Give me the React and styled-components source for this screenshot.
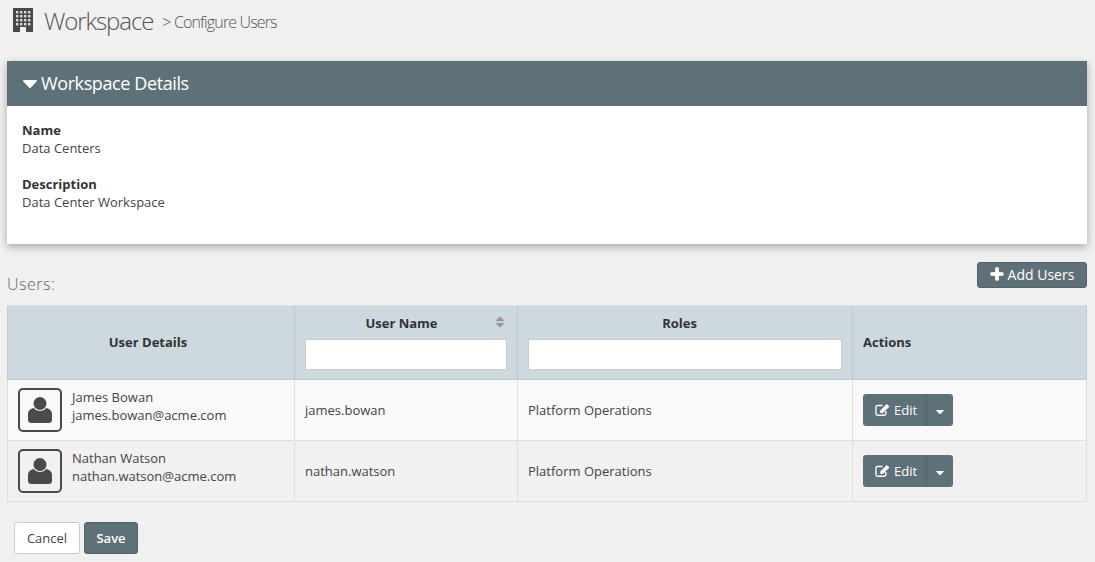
import React from 'react'
import styled, {createGlobalStyle} from 'styled-components'
import {FaCaretDown, FaPlus, FaSort} from 'react-icons/fa'

const users = [
  {name: 'James Bowan', email: 'james.bowan@acme.com', login: 'james.bowan', role: 'Platform Operations'},
  {name: 'Nathan Watson', email: 'nathan.watson@acme.com', login: 'nathan.watson', role: 'Platform Operations'}
]

const windowRows = [3, 7, 11, 15]
const windowCols = [3, 7, 11, 15]

const BuildingIcon = () => (
  <TitleIcon viewBox='0 0 20 24'>
    <rect width='20' height='24' fill='#4a4a4a' />
    {windowRows.map(y => windowCols.map(x => (
      <rect key={`${x}-${y}`} x={x} y={y} width='2.4' height='2.4' fill='#dcdcdc' />
    )))}
    <rect x='7' y='19' width='6' height='5' fill='#f4f4f4' />
  </TitleIcon>
)

const UserIcon = () => (
  <svg viewBox='0 0 24 26' width='24' height='26'>
    <circle cx='12' cy='6.5' r='6.5' fill='currentColor' />
    <path
      fill='currentColor'
      d='M0 17C0 14 2.5 11.5 6 11C8 15 16 15 18 11C21.5 11.5 24 14 24 17V22.5Q24 26 20.5 26H3.5Q0 26 0 22.5Z' />
  </svg>
)

const EditIcon = () => (
  <svg viewBox='0 0 16 14' width='15' height='14'>
    <path
      fill='none'
      stroke='currentColor'
      strokeWidth='1.4'
      d='M8 2.2H2.6Q1 2.2 1 3.8V11Q1 12.6 2.6 12.6H10Q11.6 12.6 11.6 11V8' />
    <path fill='currentColor' d='M12.6 0.6L15.4 3.2L8.4 10.2H5.6V7.4Z' />
  </svg>
)

export default function App () {
  return (
    <Page>
      <GlobalStyle />
      <PageHeader>
        <BuildingIcon />
        <Title>Workspace</Title>
        <Crumb>&gt; Configure Users</Crumb>
      </PageHeader>

      <Panel>
        <PanelHead><FaCaretDown />Workspace Details</PanelHead>
        <PanelBody>
          <Field>
            <FieldLabel>Name</FieldLabel>
            <div>Data Centers</div>
          </Field>
          <Field>
            <FieldLabel>Description</FieldLabel>
            <div>Data Center Workspace</div>
          </Field>
        </PanelBody>
      </Panel>

      <UsersBar>
        <UsersLabel>Users:</UsersLabel>
        <AddButton><FaPlus />Add Users</AddButton>
      </UsersBar>

      <Table>
        <colgroup>
          <col width='287' />
          <col width='223' />
          <col width='335' />
          <col width='234' />
        </colgroup>
        <thead>
          <tr>
            <DetailsTh>User Details</DetailsTh>
            <FilterTh>
              <SortIcon />
              <FilterLabel $inset={9}>User Name</FilterLabel>
              <FilterInput />
            </FilterTh>
            <FilterTh>
              <FilterLabel $inset={11}>Roles</FilterLabel>
              <FilterInput />
            </FilterTh>
            <ActionsTh>Actions</ActionsTh>
          </tr>
        </thead>
        <tbody>
          {users.map((user, i) => (
            <Row key={user.login} $odd={i % 2 === 0}>
              <Td>
                <UserCell>
                  <Avatar><UserIcon /></Avatar>
                  <UserText>
                    <div>{user.name}</div>
                    <div>{user.email}</div>
                  </UserText>
                </UserCell>
              </Td>
              <Td><CellText>{user.login}</CellText></Td>
              <Td><CellText>{user.role}</CellText></Td>
              <Td>
                <SplitButton>
                  <EditPart><EditIcon />Edit</EditPart>
                  <CaretPart><FaCaretDown /></CaretPart>
                </SplitButton>
              </Td>
            </Row>
          ))}
        </tbody>
      </Table>

      <Footer>
        <CancelButton>Cancel</CancelButton>
        <SaveButton>Save</SaveButton>
      </Footer>
    </Page>
  )
}

const GlobalStyle = createGlobalStyle`
  html, body {
    margin: 0;
    height: 100%;
    background: #f0f0f0;
  }
  body {
    font-family: "Open Sans", "Liberation Sans", sans-serif;
    font-size: 13px;
    color: #444;
  }
  * {
    box-sizing: border-box;
  }
`

const Page = styled.div`
  width: 1095px;
  height: 562px;
  overflow: hidden;
  padding: 0 8px 0 7px;
`

const PageHeader = styled.div`
  display: flex;
  align-items: center;
  height: 61px;
  padding: 0 0 21px 6px;
`

const TitleIcon = styled.svg`
  width: 20px;
  height: 24px;
  margin: -1px 11px 0 0;
`

const Title = styled.h1`
  margin: 0 9px 0 0;
  font-size: 24px;
  font-weight: 300;
  letter-spacing: -1.1px;
  color: #555;
`

const Crumb = styled.span`
  font-size: 16px;
  font-weight: 300;
  letter-spacing: -0.85px;
  color: #555;
  padding-top: 4px;
`

const Panel = styled.section`
  height: 183px;
  background: #fff;
  box-shadow: 0 3px 8px rgba(0, 0, 0, 0.3);
`

const PanelHead = styled.div`
  display: flex;
  align-items: center;
  height: 45px;
  padding: 0 0 2px 12px;
  background: #5f7178;
  color: #fff;
  font-size: 18px;
  letter-spacing: -0.4px;

  svg {
    width: 22px;
    height: 24px;
  }
`

const PanelBody = styled.div`
  padding: 15px 15px;
  line-height: 18px;
`

const Field = styled.div`
  margin-bottom: 18px;
`

const FieldLabel = styled.div`
  font-weight: 700;
  color: #333;
`

const UsersBar = styled.div`
  display: flex;
  justify-content: space-between;
  align-items: flex-start;
  height: 61px;
  padding-top: 18px;
`

const UsersLabel = styled.div`
  font-size: 16px;
  font-weight: 300;
  letter-spacing: 0.5px;
  color: #666;
  padding-top: 11px;
`

const AddButton = styled.button`
  display: flex;
  align-items: center;
  justify-content: center;
  gap: 4px;
  width: 110px;
  height: 26px;
  padding: 0 0 2px;
  background: #5f7178;
  border: 1px solid #52636a;
  border-radius: 3px;
  color: #fff;
  font-family: inherit;
  font-size: 14px;

  svg {
    width: 14px;
    height: 14px;
    stroke: currentColor;
    stroke-width: 40px;
  }
`

const Table = styled.table`
  width: 1079px;
  table-layout: fixed;
  border-collapse: collapse;
`

const Th = styled.th`
  height: 74px;
  padding: 0 10px 2px;
  background: #cdd9df;
  border: 1px solid #bfcbd1;
  border-top-color: #dedede;
  font-size: 13px;
  font-weight: 700;
  color: #333;
  text-align: center;
  vertical-align: middle;
`

const DetailsTh = styled(Th)`
  padding-right: 16px;
`

const FilterTh = styled(Th)`
  position: relative;
  padding: 8px 10px 8px;
  vertical-align: top;
`

const ActionsTh = styled(Th)`
  text-align: left;
`

const SortIcon = styled(FaSort)`
  position: absolute;
  top: 9px;
  right: 12px;
  width: 10px;
  height: 14px;
  color: #999;
`

const FilterLabel = styled.div`
  line-height: 18px;
  margin: 0 ${p => p.$inset}px 7px 0;
`

const FilterInput = styled.input`
  display: block;
  width: 100%;
  height: 31px;
  background: #fff;
  border: 1px solid #ccc;
`

const Row = styled.tr`
  background: ${p => p.$odd ? '#f9f9f9' : '#f1f1f1'};
`

const Td = styled.td`
  height: 61px;
  padding: 0 10px;
  border: 1px solid #ddd;
  color: #444;
`

const CellText = styled.div`
  padding-bottom: 1px;
`

const UserCell = styled.div`
  display: flex;
  align-items: center;
  gap: 10px;
  line-height: 18px;
`

const UserText = styled.div`
  padding-bottom: 8px;
`

const Avatar = styled.div`
  display: flex;
  align-items: center;
  justify-content: center;
  flex: none;
  width: 44px;
  height: 44px;
  padding-bottom: 1px;
  border: 2px solid #4a4a4a;
  border-radius: 5px;
  color: #4a4a4a;
`

const SplitButton = styled.div`
  display: flex;
  width: 90px;
  height: 32px;
  background: #5f7178;
  border-radius: 3px;
  color: #fff;
`

const EditPart = styled.div`
  display: flex;
  align-items: center;
  gap: 4px;
  width: 64px;
  padding-left: 12px;
  font-size: 13px;
  border-right: 1px solid #52636a;
`

const CaretPart = styled.div`
  display: flex;
  align-items: center;
  justify-content: center;
  width: 26px;

  svg {
    width: 10px;
    height: 13px;
    margin-top: 2px;
  }
`

const Footer = styled.div`
  display: flex;
  gap: 4px;
  padding: 20px 0 0 7px;
`

const CancelButton = styled.button`
  width: 66px;
  height: 32px;
  padding: 0;
  background: #fff;
  border: 1px solid #ccc;
  border-radius: 3px;
  color: #444;
  font-family: inherit;
  font-size: 13px;
`

const SaveButton = styled(CancelButton)`
  width: 54px;
  background: #5f7178;
  border-color: #52636a;
  color: #fff;
  font-weight: 600;
`
